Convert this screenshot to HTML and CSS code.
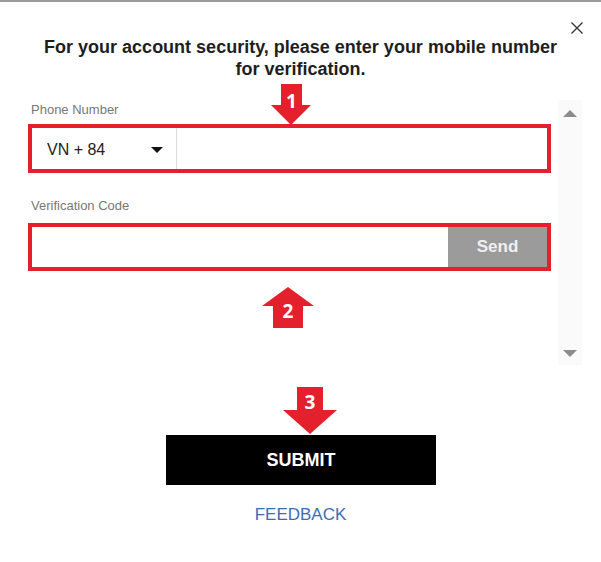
FILE: index.html
```html
<!DOCTYPE html>
<html>
<head>
<meta charset="utf-8">
<link rel="stylesheet" href="styles.css">
</head>
<body>
<div class="modal">
  <button class="close" aria-label="Close">
    <svg width="12" height="12" viewBox="0 0 12 12"><path d="M0.5 0.5 L11.5 11.5 M11.5 0.5 L0.5 11.5" stroke="#333" stroke-width="1.3" fill="none"/></svg>
  </button>
  <h1 class="title">For your account security, please enter your mobile number<br>for verification.</h1>
  <div class="scroll-area">
    <div class="form">
      <div class="label">Phone Number</div>
      <div class="field phone">
        <div class="country"><span>VN + 84</span><span class="caret"></span></div>
        <div class="phone-input"></div>
      </div>
      <div class="label label-code">Verification Code</div>
      <div class="field code">
        <div class="code-input"></div>
        <button class="send">Send</button>
      </div>
    </div>
    <div class="scrollbar">
      <span class="tri up"></span>
      <span class="tri down"></span>
    </div>
  </div>
  <div class="actions">
    <button class="submit">SUBMIT</button>
    <a class="feedback" href="#">FEEDBACK</a>
  </div>

  <svg class="arrow arrow-1" width="42" height="42" viewBox="0 0 42 42">
    <polygon points="10,0 31,0 31,21 40,21 20,41 0,21 10,21" fill="#e3202b"/>
    <text x="20.5" y="24" text-anchor="middle" class="arrow-num">1</text>
  </svg>
  <svg class="arrow arrow-2" width="52" height="42" viewBox="0 0 52 42">
    <polygon points="26,0 52,19 41,19 41,41 11,41 11,19 0,19" fill="#e3202b"/>
    <text x="26" y="31" text-anchor="middle" class="arrow-num">2</text>
  </svg>
  <svg class="arrow arrow-3" width="54" height="48" viewBox="0 0 54 48">
    <polygon points="14,0 40,0 40,23 54,23 27,47 0,23 14,23" fill="#e3202b"/>
    <text x="27" y="22" text-anchor="middle" class="arrow-num">3</text>
  </svg>
</div>
</body>
</html>
```

FILE: styles.css
```css
* { box-sizing: border-box; }
html, body { margin: 0; padding: 0; background: #fff; }
body {
  font-family: "Liberation Sans", Arial, sans-serif;
  color: #222;
  width: 601px;
  height: 562px;
  overflow: hidden;
}
.modal {
  position: relative;
  height: 562px;
  border-top: 2px solid #9a9a9a;
  padding-top: 34px;
}
.close {
  position: absolute;
  top: 20px;
  right: 18px;
  border: 0;
  background: none;
  padding: 0;
  width: 12px;
  height: 12px;
  line-height: 0;
}
.title {
  margin: 0;
  font-size: 18px;
  line-height: 22px;
  font-weight: bold;
  text-align: center;
  color: #1e1e1e;
  padding-left: 0;
}
.scroll-area {
  display: flex;
  margin-top: 20px;
  padding-left: 28px;
  height: 265px;
}
.form {
  width: 523px;
  padding-top: 2px;
}
.label {
  font-size: 13px;
  line-height: 16px;
  color: #777;
  padding-left: 3px;
  margin-bottom: 6px;
}
.label-code {
  margin-top: 25px;
  margin-bottom: 9px;
}
.field {
  display: flex;
  border: 4px solid #e3202b;
  background: #fff;
}
.phone { height: 49px; }
.country {
  width: 145px;
  border-right: 1px solid #ddd;
  display: flex;
  align-items: center;
  justify-content: space-between;
  padding: 2px 13px 0 15px;
  font-size: 16px;
  color: #222;
}
.caret {
  width: 0;
  height: 0;
  border-left: 6px solid transparent;
  border-right: 6px solid transparent;
  border-top: 6px solid #111;
}
.phone-input { flex: 1; }
.code { height: 48px; }
.code-input { flex: 1; }
.send {
  width: 99px;
  border: 0;
  background: #9b9b9b;
  color: #f0f0f0;
  font-family: "Liberation Sans", Arial, sans-serif;
  font-weight: bold;
  font-size: 17px;
  padding: 0;
}
.scrollbar {
  width: 24px;
  margin-left: 7px;
  background: #fafafa;
  display: flex;
  flex-direction: column;
  justify-content: space-between;
  align-items: center;
  padding: 10px 0 8px;
}
.tri {
  width: 0;
  height: 0;
  border-left: 7px solid transparent;
  border-right: 7px solid transparent;
}
.up { border-bottom: 7px solid #8c8c8c; }
.down { border-top: 7px solid #8c8c8c; }
.actions {
  display: flex;
  flex-direction: column;
  align-items: center;
  margin-top: 70px;
}
.submit {
  width: 270px;
  height: 50px;
  margin-left: 1px;
  background: #000;
  color: #fff;
  border: 0;
  font-family: "Liberation Sans", Arial, sans-serif;
  font-weight: bold;
  font-size: 18px;
  padding: 0;
}
.feedback {
  margin-top: 20px;
  font-size: 17px;
  line-height: 20px;
  color: #3b6db4;
  text-decoration: none;
}
.arrow { position: absolute; }
.arrow-1 { left: 271px; top: 82px; }
.arrow-2 { left: 262px; top: 285px; }
.arrow-3 { left: 283px; top: 385px; }
.arrow-num {
  fill: #fff;
  font-family: "Open Sans", "Liberation Sans", sans-serif;
  font-weight: bold;
  font-size: 19px;
}
```
